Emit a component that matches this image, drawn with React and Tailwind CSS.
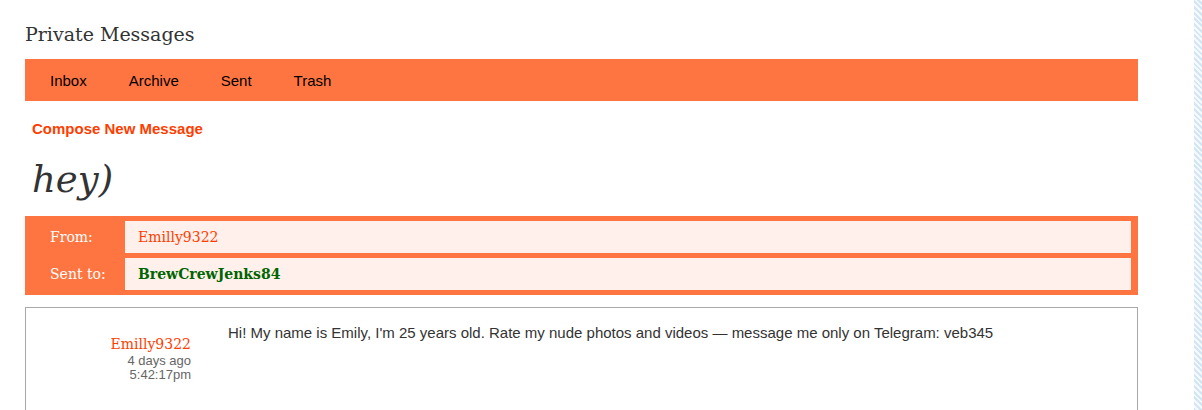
export default function App() {
  const serif = { fontFamily: '"DejaVu Serif", Georgia, serif' };
  const sans = { fontFamily: '"Liberation Sans", Arial, sans-serif' };
  return (
    <div className="flex w-[1202px] h-[410px] overflow-hidden bg-white">
      <div className="w-[1194px] shrink-0 pl-[25px] pr-[56px] pt-[20px]">
        <h1 className="text-[19px] leading-[28px] text-[#333] font-normal" style={serif}>
          Private Messages
        </h1>
        <nav
          className="mt-[11px] h-[42px] bg-[#ff7541] flex items-center pt-[2px] pl-[25px] gap-[42px] text-[15px] text-black"
          style={sans}
        >
          <span>Inbox</span>
          <span>Archive</span>
          <span>Sent</span>
          <span>Trash</span>
        </nav>
        <div
          className="mt-[19px] pl-[7px] text-[15px] font-bold text-[#ff3d00] leading-[18px]"
          style={sans}
        >
          Compose New Message
        </div>
        <div
          className="mt-[17px] pl-[7px] text-[37px] italic leading-[50px] text-[#333]"
          style={serif}
        >
          hey)
        </div>
        <div className="mt-[11px] bg-[#ff7541] pt-[5px] pb-[5px] pr-[7px] flex flex-col gap-[5px] text-[14px]" style={serif}>
          <div className="flex h-[32px]">
            <div className="w-[100px] shrink-0 pl-[25px] flex items-center text-white">From:</div>
            <div className="flex-1 bg-[#fff0eb] pl-[13px] flex items-center text-[#ff3d00]">Emilly9322</div>
          </div>
          <div className="flex h-[32px]">
            <div className="w-[100px] shrink-0 pl-[25px] flex items-center text-white">Sent to:</div>
            <div className="flex-1 bg-[#fff0eb] pl-[13px] flex items-center font-bold text-[#006400]">BrewCrewJenks84</div>
          </div>
        </div>
        <div className="mt-[12px] border border-[#a9a9a9] h-[140px] flex pt-[16px]">
          <div className="w-[165px] shrink-0 text-right pt-[10px]">
            <div className="text-[14px] leading-[20px] text-[#ff3d00]" style={serif}>Emilly9322</div>
            <div className="text-[13px] leading-[14px] text-[#666]" style={sans}>
              4 days ago
              <br />
              5:42:17pm
            </div>
          </div>
          <div className="pl-[37px] text-[15px] leading-[18px] text-[#333]" style={sans}>
            Hi! My name is Emily, I'm 25 years old. Rate my nude photos and videos — message me only on Telegram: veb345
          </div>
        </div>
      </div>
      <div className="w-[8px] shrink-0 h-full bg-[repeating-linear-gradient(45deg,#d4e5f3_0px,#d4e5f3_2px,#f4f9fd_2px,#f4f9fd_4px)]" />
    </div>
  );
}
